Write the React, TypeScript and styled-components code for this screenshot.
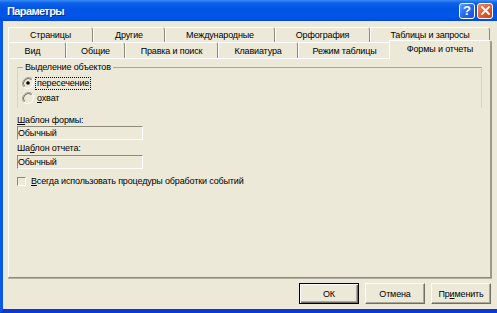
import React from "react";
import styled, { createGlobalStyle, css } from "styled-components";

const Global = createGlobalStyle`
  html, body { margin: 0; padding: 0; overflow: hidden; background: #ece9d8; }
  body { font-family: "Liberation Sans", Arial, sans-serif; }
  * { box-sizing: border-box; }
`;

const FONT = `"Liberation Sans", Arial, sans-serif`;

const Window = styled.div`
  width: 497px;
  height: 313px;
  display: flex;
  flex-direction: column;
  background: #ece9d8;
`;

const TitleBar = styled.div`
  height: 21px;
  flex: none;
  display: flex;
  align-items: center;
  gap: 2px;
  padding: 0 4px 0 7px;
  background: linear-gradient(
    180deg,
    #3a8cf6 0%,
    #0e62ea 14%,
    #0055e4 40%,
    #0056e8 80%,
    #0049d8 100%
  );
`;

const Title = styled.span`
  flex: 1;
  color: #fff;
  font: bold 11px ${FONT};
  letter-spacing: -0.6px;
  text-shadow: 1px 1px 0 #0a2a9a;
`;

const CaptionButton = styled.div<{ $kind: "help" | "close" }>`
  width: 16px;
  height: 16px;
  border: 1px solid #fff;
  border-radius: 3px;
  display: flex;
  align-items: center;
  justify-content: center;
  color: #fff;
  font: bold 13px ${FONT};
  ${(p) =>
    p.$kind === "help"
      ? css`
          background: linear-gradient(135deg, #5a9bff 0%, #2265ef 55%, #1a52dc 100%);
        `
      : css`
          background: linear-gradient(135deg, #f08a62 0%, #e05a2c 55%, #c8421c 100%);
        `}
`;

const Frame = styled.div`
  flex: 1;
  display: flex;
  flex-direction: column;
  border-left: 3px solid #0a5ae6;
  border-bottom: 4px solid #0a3ad0;
  padding: 6px 0 0 5px;
  font: 9px ${FONT};
  letter-spacing: -0.15px;
  color: #000;
`;

const TabRow = styled.div<{ $h: number }>`
  display: flex;
  width: 482px;
  height: ${(p) => p.$h}px;
  flex: none;
`;

const Tab = styled.div<{ $w: number; $shift?: number; $active?: boolean }>`
  width: ${(p) => p.$w}px;
  flex: none;
  height: 100%;
  display: flex;
  align-items: center;
  justify-content: center;
  padding-right: ${(p) => p.$shift ?? 0}px;
  border-top: 1px solid #fff;
  border-left: 1px solid #fff;
  border-right: 1px solid #8d8a7b;
  border-top-right-radius: 3px;
  background: #ece9d8;
  white-space: nowrap;
  ${(p) =>
    p.$active &&
    css`
      position: relative;
      z-index: 1;
      margin: -2px -2px -1px -2px;
      height: calc(100% + 3px);
      width: ${p.$w + 4}px;
      border-right: 2px solid #9d9a8b;
      padding-bottom: 3px;
    `}
`;

const Panel = styled.div`
  width: 484px;
  height: 220px;
  flex: none;
  border-top: 1px solid #fff;
  border-left: 1px solid #fff;
  border-right: 2px solid #9d9a8b;
  border-bottom: 1px solid #8d8a7b;
  box-shadow: 0 1px 0 #b5b2a3;
  display: flex;
  flex-direction: column;
  padding: 0 8px;
`;

const GroupBox = styled.fieldset`
  margin: 2px 0 0 0;
  padding: 0 0 0 4px;
  height: 47px;
  border: 1px solid #d6d3c3;
  border-top-color: #aca899;
  border-bottom-color: transparent;
  display: flex;
  flex-direction: column;
  gap: 3px;
`;

const Legend = styled.legend`
  padding: 0 2px;
  margin-left: 1px;
  line-height: 12px;
`;

const OptionRow = styled.div`
  display: flex;
  align-items: center;
  height: 12px;
  gap: 2px;
  &:first-of-type {
    margin-top: 4px;
  }
`;

const OptionLabel = styled.span<{ $focus?: boolean }>`
  line-height: 11px;
  padding: 0 1px;
  ${(p) =>
    p.$focus &&
    css`
      outline: 1px dotted #000;
    `}
`;

const FieldLabel = styled.div<{ $top: number }>`
  margin-top: ${(p) => p.$top}px;
  line-height: 12px;
  height: 12px;
`;

const TextBox = styled.div<{ $top?: number }>`
  width: 126px;
  height: 14px;
  margin-top: ${(p) => p.$top ?? 0}px;
  border-top: 1px solid #8d8a7b;
  border-left: 1px solid #8d8a7b;
  border-right: 1px solid #fff;
  border-bottom: 1px solid #fff;
  line-height: 12px;
`;

const CheckRow = styled.div`
  margin-top: 6px;
  display: flex;
  align-items: center;
  gap: 5px;
  height: 12px;
`;

const CheckBox = styled.span`
  width: 9px;
  height: 9px;
  border-top: 1px solid #8d8a7b;
  border-left: 1px solid #8d8a7b;
  border-right: 1px solid #fff;
  border-bottom: 1px solid #fff;
`;

const ButtonRow = styled.div`
  display: flex;
  justify-content: flex-end;
  gap: 6px;
  padding-right: 6px;
  margin-top: 5px;
`;

const Button = styled.button<{ $default?: boolean }>`
  width: 60px;
  height: 21px;
  padding: 0;
  background: #ece9d8;
  font: 9px ${FONT};
  letter-spacing: -0.15px;
  color: #000;
  border: 1px solid;
  border-color: #fff #716f64 #716f64 #fff;
  box-shadow: inset -1px -1px 0 #aca899;
  ${(p) =>
    p.$default &&
    css`
      border-color: #000;
      box-shadow: inset 1px 1px 0 #fff, inset -1px -1px 0 #716f64,
        inset -2px -2px 0 #aca899;
    `}
`;

const Radio = ({ checked }: { checked?: boolean }) => (
  <svg width="12" height="12" viewBox="0 0 12 12">
    <path d="M10.2 1.8 A6 6 0 0 0 1.8 10.2" fill="none" stroke="#aca899" strokeWidth="1" />
    <path d="M9.5 2.5 A5 5 0 0 0 2.5 9.5" fill="none" stroke="#716f64" strokeWidth="1" />
    <path d="M1.8 10.2 A6 6 0 0 0 10.2 1.8" fill="none" stroke="#fff" strokeWidth="1" />
    {checked && <circle cx="6" cy="6" r="1.8" fill="#000" />}
  </svg>
);

const CloseIcon = () => (
  <svg width="9" height="9" viewBox="0 0 9 9">
    <path d="M1 1 L8 8 M8 1 L1 8" stroke="#fff" strokeWidth="1.8" strokeLinecap="square" />
  </svg>
);

const row1 = [
  { t: "Страницы", w: 85 },
  { t: "Другие", w: 72 },
  { t: "Международные", w: 110 },
  { t: "Орфография", w: 95 },
  { t: "Таблицы и запросы", w: 120 },
];

const row2 = [
  { t: "Вид", w: 58, s: 9 },
  { t: "Общие", w: 59 },
  { t: "Правка и поиск", w: 93 },
  { t: "Клавиатура", w: 80 },
  { t: "Режим таблицы", w: 93 },
  { t: "Формы и отчеты", w: 99, a: true },
];

export default function App() {
  return (
    <>
      <Global />
      <Window>
        <TitleBar>
          <Title>Параметры</Title>
          <CaptionButton $kind="help">?</CaptionButton>
          <CaptionButton $kind="close">
            <CloseIcon />
          </CaptionButton>
        </TitleBar>
        <Frame>
          <TabRow $h={15}>
            {row1.map((r) => (
              <Tab key={r.t} $w={r.w}>
                {r.t}
              </Tab>
            ))}
          </TabRow>
          <TabRow $h={16}>
            {row2.map((r) => (
              <Tab key={r.t} $w={r.w} $shift={r.s} $active={r.a}>
                {r.t}
              </Tab>
            ))}
          </TabRow>
          <Panel>
            <GroupBox>
              <Legend>Выделение объектов</Legend>
              <OptionRow>
                <Radio checked />
                <OptionLabel $focus>пересечение</OptionLabel>
              </OptionRow>
              <OptionRow>
                <Radio />
                <OptionLabel>
                  <u>о</u>хват
                </OptionLabel>
              </OptionRow>
            </GroupBox>
            <FieldLabel $top={6}>
              <u>Ш</u>аблон формы:
            </FieldLabel>
            <TextBox>Обычный</TextBox>
            <FieldLabel $top={2}>
              Ша<u>б</u>лон отчета:
            </FieldLabel>
            <TextBox $top={1}>Обычный</TextBox>
            <CheckRow>
              <CheckBox />
              <span>
                <u>В</u>сегда использовать процедуры обработки событий
              </span>
            </CheckRow>
          </Panel>
          <ButtonRow>
            <Button $default>ОК</Button>
            <Button>Отмена</Button>
            <Button>
              Пр<u>и</u>менить
            </Button>
          </ButtonRow>
        </Frame>
      </Window>
    </>
  );
}
